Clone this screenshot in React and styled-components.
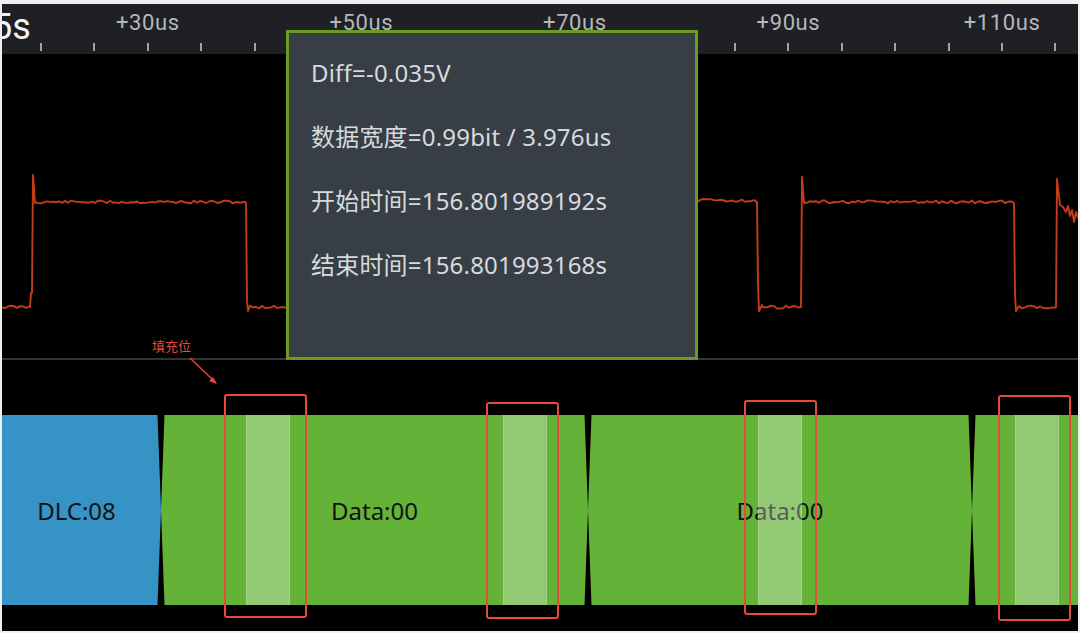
import React from "react";
import styled, { createGlobalStyle } from "styled-components";

const GlobalStyle = createGlobalStyle`
  html, body {
    margin: 0;
    padding: 0;
    background: #f2f2f2;
  }
  * {
    box-sizing: border-box;
  }
`;

const Frame = styled.div`
  width: 1080px;
  height: 633px;
  padding: 4px 2px 2px 2px;
  background: #efefef;
  font-family: "Noto Sans", "Noto Sans CJK SC", sans-serif;
`;

const Screen = styled.div`
  position: relative;
  width: 1076px;
  height: 627px;
  background: #000;
  display: flex;
  flex-direction: column;
  overflow: hidden;
`;

const Header = styled.div`
  height: 50px;
  flex: 0 0 50px;
  background: #1e2025;
  display: grid;
  overflow: hidden;
`;

const Stamp = styled.div`
  grid-area: 1 / 1;
  margin-left: -10px;
  padding-top: 2px;
  font-family: Roboto, "Noto Sans", sans-serif;
  font-size: 36px;
  line-height: 42px;
  color: #f4f4f4;
`;

const TickRow = styled.div`
  grid-area: 1 / 1;
  display: flex;
  padding-left: 12.3px;
`;

const TickCell = styled.div`
  flex: 0 0 53.4px;
  min-width: 0;
  display: flex;
  flex-direction: column;
  align-items: center;
  justify-content: space-between;
  padding: 6px 0 3px;
`;

const TickLabel = styled.span`
  font-family: Roboto, "Noto Sans", sans-serif;
  font-size: 22px;
  line-height: 26px;
  letter-spacing: 0.6px;
  color: #b4b7bb;
  white-space: nowrap;
  height: 26px;
`;

const Tick = styled.span`
  width: 2px;
  height: 8px;
  background: #9fa2a6;
`;

const WavePane = styled.div`
  height: 306px;
  flex: 0 0 306px;
  border-bottom: 2px solid #343434;
`;

const Lane = styled.div`
  flex: 1;
  padding-top: 55px;
`;

const Bus = styled.div`
  position: relative;
  height: 190px;
  display: flex;
`;

const Segment = styled.div`
  flex: 0 0 ${({ $w }) => $w}px;
  background: ${({ $color }) => $color};
  display: flex;
  align-items: center;
  justify-content: center;
  padding-right: ${({ $shift }) => $shift || 0}px;
  font-size: 24px;
  color: #121212;
  clip-path: polygon(
    ${({ $l }) => ($l ? "3.5px 0" : "0 0")},
    ${({ $r }) => ($r ? "calc(100% - 3.5px) 0, 100% 50%, calc(100% - 3.5px) 100%" : "100% 0, 100% 100%")},
    ${({ $l }) => ($l ? "3.5px 100%, 0 50%" : "0 100%")}
  );
`;

const StuffBit = styled.div`
  position: absolute;
  top: 0;
  bottom: 0;
  width: 44px;
  background: rgba(255, 255, 255, 0.3);
  border-left: 1px solid rgba(255, 255, 255, 0.15);
  border-right: 1px solid rgba(255, 255, 255, 0.15);
`;

const Mark = styled.div`
  position: absolute;
  border: 2px solid #e8493a;
  border-radius: 3px;
`;

const Note = styled.div`
  position: absolute;
  left: 150px;
  top: 334px;
  font-size: 13px;
  line-height: 16px;
  color: #e8493a;
`;

const Arrow = styled.svg`
  position: absolute;
  left: 180px;
  top: 350px;
  overflow: visible;
`;

const Tooltip = styled.div`
  position: absolute;
  left: 284px;
  top: 26px;
  width: 412px;
  height: 330px;
  border: 3px solid #6b9b21;
  background: #383e46;
  padding: 8px 22px;
  display: flex;
  flex-direction: column;
`;

const TipLine = styled.div`
  font-size: 24px;
  line-height: 64px;
  letter-spacing: 0.2px;
  color: #d6dade;
  white-space: nowrap;
`;

// deterministic jitter for the trace
let seed = 11;
const rand = () => {
  seed = (seed * 9301 + 49297) % 233280;
  return seed / 233280;
};

const flat = (x1, x2, y, amp = 1.5) => {
  const out = [];
  for (let x = x1; x < x2; x += 3) out.push([x, y + (rand() - 0.5) * 2 * amp]);
  return out;
};

const trace = [
  ...flat(2, 30, 307),
  [30, 307], [31, 293], [32, 293], [33, 175], [35, 203],
  ...flat(35, 246, 202),
  [246, 203], [247, 300], [248, 311], [250, 306],
  ...flat(250, 420, 307),
  [420, 307], [421, 203],
  ...flat(421, 757, 200.5),
  [757, 202], [758, 283], [759, 311], [762, 305],
  ...flat(762, 801, 307),
  [801, 307], [802, 177], [804, 203],
  ...flat(804, 1014, 202),
  [1014, 203], [1015, 295], [1016, 311], [1019, 306],
  ...flat(1019, 1056, 307),
  [1056, 307], [1057, 179], [1060, 205], [1063, 207], [1066, 212],
  [1068, 206], [1070, 216], [1072, 210], [1074, 222], [1076, 212], [1078, 218],
];

const tracePath = trace
  .map(([x, y], i) => `${i ? "L" : "M"}${x.toFixed(1)} ${y.toFixed(1)}`)
  .join(" ");

const ticks = Array.from({ length: 20 }, (_, k) => k);
const labelFor = (k) => (k % 4 === 2 ? `+${20 + k * 5}us` : "");

const segments = [
  { w: 159, color: "#3593c6", l: false, r: true, shift: 10, text: "DLC:08" },
  { w: 427, color: "#65b238", l: true, r: true, text: "Data:00" },
  { w: 384, color: "#65b238", l: true, r: true, text: "Data:00" },
  { w: 106, color: "#65b238", l: true, r: false, text: "" },
];

const stuffBits = [244, 501, 756, 1013];

const marks = [
  { x: 222, y: 390, w: 83, h: 224 },
  { x: 484, y: 398, w: 73, h: 217 },
  { x: 742, y: 396, w: 73, h: 215 },
  { x: 996, y: 391, w: 73, h: 226 },
];

const tipLines = [
  "Diff=-0.035V",
  "数据宽度=0.99bit / 3.976us",
  "开始时间=156.801989192s",
  "结束时间=156.801993168s",
];

export default function App() {
  return (
    <Frame>
      <GlobalStyle />
      <Screen>
        <Header>
          <Stamp>5s</Stamp>
          <TickRow>
            {ticks.map((k) => (
              <TickCell key={k}>
                <TickLabel>{labelFor(k)}</TickLabel>
                <Tick />
              </TickCell>
            ))}
          </TickRow>
        </Header>

        <WavePane>
          <svg width="1076" height="304" viewBox="2 54 1076 304">
            <path d={tracePath} fill="none" stroke="#c43b1c" strokeWidth="1.9" strokeLinejoin="round" />
          </svg>
        </WavePane>

        <Lane>
          <Bus>
            {segments.map((s, i) => (
              <Segment key={i} $w={s.w} $color={s.color} $l={s.l} $r={s.r} $shift={s.shift}>
                {s.text}
              </Segment>
            ))}
            {stuffBits.map((x) => (
              <StuffBit key={x} style={{ left: x }} />
            ))}
          </Bus>
        </Lane>

        {marks.map((m, i) => (
          <Mark key={i} style={{ left: m.x, top: m.y, width: m.w, height: m.h }} />
        ))}

        <Note>填充位</Note>
        <Arrow width="40" height="36" viewBox="0 0 40 36">
          <line x1="8" y1="4" x2="33" y2="28" stroke="#e8493a" strokeWidth="1.4" />
          <path d="M35 30 L27 27 L31 23 Z" fill="#e8493a" />
        </Arrow>

        <Tooltip>
          {tipLines.map((t) => (
            <TipLine key={t}>{t}</TipLine>
          ))}
        </Tooltip>
      </Screen>
    </Frame>
  );
}
